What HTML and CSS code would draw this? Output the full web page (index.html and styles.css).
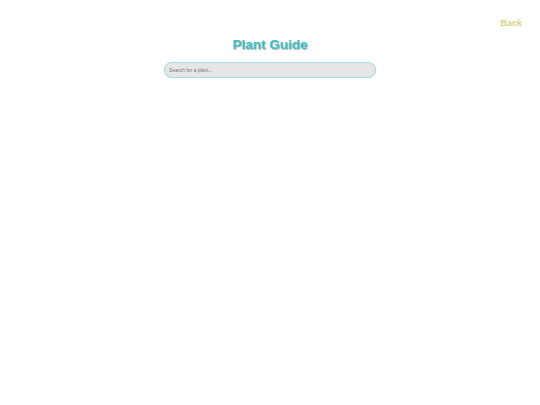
FILE: index.html
```html
<!DOCTYPE html>
<html>
<head>
<meta charset="utf-8">
<link rel="stylesheet" href="styles.css">
</head>
<body>
<div class="page">
  <div class="topbar"><a class="back" href="#">Back</a></div>
  <h1 class="title">Plant Guide</h1>
  <div class="search-wrap">
    <input class="search" type="text" placeholder="Search for a plant...">
  </div>
</div>
</body>
</html>
```
FILE: styles.css
```css
html, body {
  margin: 0;
  padding: 0;
  background: #ffffff;
  font-family: "Liberation Sans", Arial, sans-serif;
}
.page {
  display: flex;
  flex-direction: column;
  align-items: center;
}
.topbar {
  align-self: stretch;
  display: flex;
  justify-content: flex-end;
  padding: 17px 18px 0 0;
  height: 12px;
}
.back {
  color: #d6d283;
  font-size: 9px;
  font-weight: bold;
  text-decoration: none;
  line-height: 12px;
}
.title {
  margin: 8px 0 0 0;
  font-size: 13.5px;
  line-height: 16px;
  font-weight: bold;
  color: #3cc0c6;
  text-shadow: 1px 1px 1px rgba(0,0,0,0.3);
}
.search-wrap {
  margin-top: 9px;
  display: flex;
  justify-content: center;
}
.search {
  box-sizing: border-box;
  width: 212px;
  height: 16px;
  border: 1px solid #a9dde0;
  border-radius: 8px;
  background: #e6e6e6;
  padding: 0 4px;
  font-family: "Liberation Sans", Arial, sans-serif;
  font-size: 5px;
  outline: none;
  box-shadow: 0 0 1px rgba(80,190,200,0.5);
}
.search::placeholder {
  color: #777777;
}
```
